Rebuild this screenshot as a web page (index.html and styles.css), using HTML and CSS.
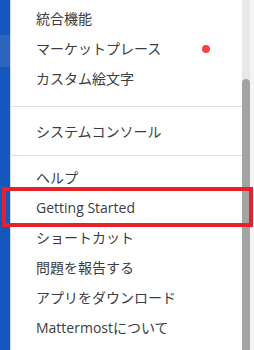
FILE: index.html
```html
<!DOCTYPE html>
<html lang="ja">
<head>
<meta charset="utf-8">
<link rel="stylesheet" href="styles.css">
</head>
<body>
<div class="page">
  <div class="sidebar">
    <div class="sb-top"></div>
    <div class="sb-hover"></div>
    <div class="sb-rest"></div>
  </div>
  <div class="menu">
    <ul class="group">
      <li class="item">統合機能</li>
      <li class="item with-dot"><span>マーケットプレース</span><span class="dot"></span></li>
      <li class="item">カスタム絵文字</li>
    </ul>
    <div class="sep sep1"></div>
    <ul class="group">
      <li class="item">システムコンソール</li>
    </ul>
    <div class="sep sep2"></div>
    <ul class="group">
      <li class="item">ヘルプ</li>
      <li class="item latin">Getting Started</li>
      <li class="item">ショートカット</li>
      <li class="item">問題を報告する</li>
      <li class="item">アプリをダウンロード</li>
      <li class="item">Mattermostについて</li>
    </ul>
  </div>
  <div class="scrollbar">
    <div class="thumb"></div>
  </div>
  <div class="edge"></div>
  <div class="highlight"></div>
</div>
</body>
</html>
```
FILE: styles.css
```css
* { box-sizing: border-box; }
html, body { margin: 0; padding: 0; background: #fff; }
body {
  font-family: "Open Sans", "Noto Sans CJK JP", sans-serif;
  font-size: 14px;
  color: #3d3c40;
}
.page {
  position: relative;
  display: flex;
  width: 254px;
  height: 350px;
  overflow: hidden;
}
.sidebar {
  width: 11px;
  display: flex;
  flex-direction: column;
  border-right: 1px solid #d6dbe3;
}
.sb-top { height: 35px; background: #1457bd; }
.sb-hover { height: 32px; background: #2b65bd; }
.sb-rest { flex: 1; background: #1457bd; }
.menu {
  flex: 1;
  padding-top: 4px;
  background: #fff;
}
.group { list-style: none; margin: 0; padding: 0; }
.item {
  height: 30px;
  line-height: 30px;
  padding-left: 25px;
  white-space: nowrap;
}
.with-dot {
  display: flex;
  align-items: center;
  justify-content: space-between;
  padding-right: 32px;
}
.dot {
  width: 8px;
  height: 8px;
  border-radius: 50%;
  background: #f74343;
}
.sep {
  height: 1px;
  background: #dddddd;
}
.sep1 { margin: 12px 0 10px; }
.sep2 { margin: 8px 0 7px; }
.scrollbar {
  width: 8px;
  background: #e8e8e8;
  padding-top: 79px;
  display: flex;
}
.thumb {
  flex: 1;
  background: #a3a3a3;
  border-radius: 4px 4px 0 0;
}
.edge {
  width: 4px;
  background: #f4f4f4;
}
.highlight {
  position: absolute;
  left: 2px;
  top: 187px;
  width: 251px;
  height: 40px;
  border: 4px solid #e8202a;
}
```
